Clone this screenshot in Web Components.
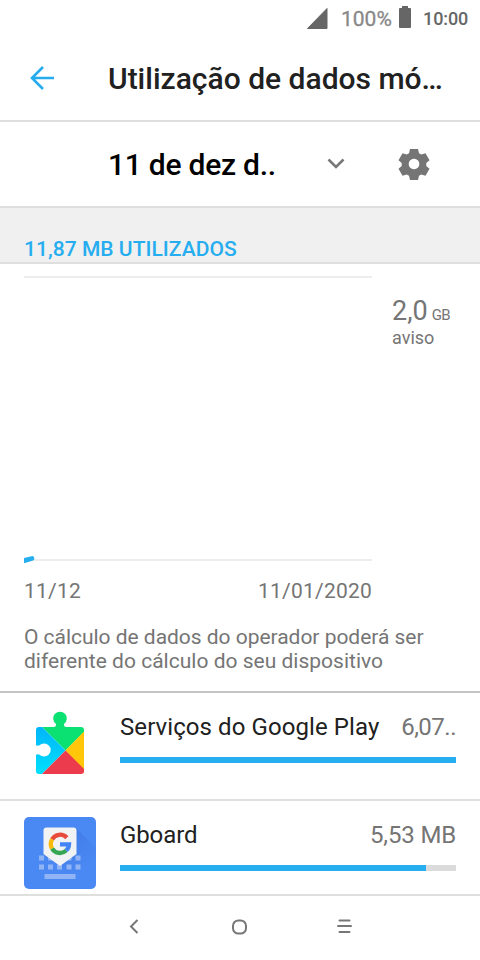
<!DOCTYPE html>
<html lang="pt"><head><meta charset="utf-8"><title>Utilização de dados móveis</title>
<style>html,body{margin:0;background:#fff}body{width:480px;height:960px;overflow:hidden;font-family:Roboto,"Liberation Sans",sans-serif}</style></head>
<body><data-screen></data-screen>
<script>
const def=(name,css,html)=>customElements.define(name,class extends HTMLElement{
  constructor(){super();this.attachShadow({mode:'open'}).innerHTML=`<style>*{box-sizing:border-box}svg{display:block;flex:none}${css}</style>${html}`}
  connectedCallback(){const f=this.shadowRoot.querySelector('.fill');if(f)f.style.width=this.getAttribute('value')+'px'}
});
def('status-bar',`:host{display:flex;height:38px;padding-left:306px;color:#666}
 .p{font-size:21px;line-height:38px;margin-left:13px;color:#888;width:58px;letter-spacing:0;-webkit-text-stroke:.3px #888}
 .t{font-size:18px;line-height:38px;font-weight:500;margin-left:12px;letter-spacing:-.1px}`,
 `<svg width="22" height="38"><path d="M21 8.500v20H1.500z" fill="#666" stroke="#666" stroke-width="1" stroke-linejoin="round"/></svg><span class="p">100%</span>
 <svg width="12" height="38"><path d="M3 6h6v2h2q1 0 1 1v18q0 1-1 1H1q-1 0-1-1V9q0-1 1-1h2z" fill="#666"/></svg><span class="t">10:00</span>`);
def('title-bar',`:host{display:flex;align-items:center;height:84px;padding-left:28px;border-bottom:2px solid #dfdfdf}
 h1{margin:0 0 0 52px;font:500 30px/82px Roboto,sans-serif;color:#212121;white-space:nowrap}`,
 `<svg width="28" height="28" fill="none" stroke="#26abee" stroke-width="2.600"><path d="M26 13H4M15 2L4 13l11 11"/></svg><h1><slot></slot></h1>`);
def('cycle-picker',`:host{display:flex;align-items:center;height:86px;padding-left:108px;border-bottom:2px solid #dfdfdf}
 b{font:500 30px/82px Roboto,sans-serif;letter-spacing:-.25px;width:219px;color:#000;padding-top:2px;white-space:nowrap}.g{margin-left:52px}`,
 `<b><slot></slot></b><svg width="18" height="18" fill="none" stroke="#777" stroke-width="2.500"><path d="M1.500 4.500L9 12l7.500-7.500"/></svg>
 <svg class="g" width="34" height="34" viewBox="0 0 34 34"><path fill="#757575" fill-rule="evenodd" d="M13 2h8l1 4.200 2.300 1.300 4.200-1.300 4 7-3.200 2.900v2.800l3.200 2.900-4 6.900-4.200-1.300-2.300 1.400-1 4.100h-8l-1-4.100-2.300-1.400-4.200 1.300-4-6.900 3.200-2.900v-2.800l-3.200-2.900 4-7 4.200 1.300L12 6.200zM17 11.700a5.300 5.300 0 1 0 .01 0z"/></svg>`);
def('usage-label',`:host{display:block;height:56px;padding:28px 24px 0;background:#f0f0f0;border-bottom:2px solid #dfdfdf;color:#26adef;font:500 21px/26px Roboto,sans-serif;letter-spacing:.04px}`,`<slot></slot>`);
def('usage-chart',`:host{display:grid;grid-template-columns:348px 1fr;column-gap:20px;padding:12px 0 0 24px;color:#757575;height:361px;align-content:start}
 .r{padding-top:20px}.v{font-size:27px;line-height:30px;height:30px}.v small{font-size:15px;margin-left:4px;letter-spacing:-.7px}.a{font-size:18px;line-height:24px}
 .d{display:flex;justify-content:space-between;font-size:21px;line-height:26px;margin-top:14px;letter-spacing:.22px}`,
 `<svg width="348" height="288"><path d="M0 1h348M0 284h348" stroke="#ededed" stroke-width="2"/><path d="M0 282L7.500 280.200a2.300 2.300 0 0 1 1 4.600L0 287.200z" fill="#26aeef"/></svg>
 <div class="r"><div class="v">2,0<small>GB</small></div><div class="a">aviso</div></div><div class="d"><span>11/12</span><span>11/01/2020</span></div>`);
def('carrier-note',`:host{display:block;height:68px;padding:0 24px;border-bottom:2px solid #c4c4c4;color:#757575;font-size:21px;line-height:24px;letter-spacing:-.03px;white-space:nowrap}`,`<slot></slot>`);
def('usage-row',`:host{display:grid;grid-template-columns:72px 336px;column-gap:24px;height:108px;padding:16px 24px 0;border-bottom:2px solid #dfdfdf}
 .h{display:flex;justify-content:space-between;font-size:24px;line-height:36px;color:#212121;white-space:nowrap}.h>div{letter-spacing:var(--ls,0)}.h>span{color:#757575;letter-spacing:var(--as,-.15px)}
 .bar{height:6px;background:#dbdbdb;margin-top:12px}.fill{height:6px;background:#26aef0}`,
 `<slot name="icon"></slot><div><div class="h"><div><slot></slot></div><span><slot name="amount"></slot></span></div><div class="bar"><div class="fill"></div></div></div>`);
def('play-icon',`:host{display:block}`,
 `<svg width="72" height="72" viewBox="24 709 72 72"><defs><clipPath id="c"><path d="M39 727h14.500q3.500 0 2.300-3.200a6.800 6.800 0 1 1 8.400 0q-1.200 3.200 2.300 3.200H81q3 0 3 3v41q0 3-3 3H39q-3 0-3-3v-15.500q0-1.800 3-1 2.500 2 5.200 2a6.500 6.500 0 1 0 0-13q-2.700 0-5.200 2-3 .8-3-1V730q0-3 3-3z"/></clipPath><linearGradient id="b" x1="0" y1="0" x2="0" y2="1"><stop stop-color="#00b5fa"/><stop offset="1" stop-color="#00e0fc"/></linearGradient></defs>
 <g clip-path="url(#c)"><path d="M36 700h48v32L65.500 750.500 42 727z" fill="#0be073"/><path d="M36 727h6L65.500 750.500 42 774h-6z" fill="url(#b)"/><path d="M65.500 750.500L84 731.500v42z" fill="#ffc60a"/><path d="M65.500 750.500L84 769v5H42z" fill="#ec3b4c"/></g></svg>`);
def('gboard-icon',`:host{display:block}`,
 `<svg width="72" height="72"><defs><clipPath id="c"><rect width="72" height="72" rx="5"/></clipPath><linearGradient id="s" gradientUnits="userSpaceOnUse" x1="40" y1="24" x2="60" y2="52"><stop stop-color="#3467cf"/><stop offset="1" stop-color="#4a88f3"/></linearGradient></defs>
 <g clip-path="url(#c)"><rect width="72" height="72" fill="#4a88f3"/><path d="M52 11L72 31V72H58L36 49z" fill="url(#s)" opacity=".3"/>
 <path fill="#91b5f4" d="M15 38.500h5v5h-5zM24 38.500h5v5h-5zM42.500 38.500h5v5h-5zM51.500 38.500h5v5h-5zM15 47.500h5v5h-5zM24 47.500h5v5h-5zM33 47.500h5v5h-5zM42.500 47.500h5v5h-5zM51.500 47.500h5v5h-5zM20.500 57h31v5h-31z"/>
 <path d="M22.500 10.500h27q3 0 3 3V37L36 49 19.500 37V13.500q0-3 3-3z" fill="#f1f2f4"/></g>
 <g fill="none" stroke-width="4.300"><path d="M42.800 20.700A9.100 9.100 0 0 0 28.100 22.400" stroke="#e84a3b"/><path d="M28.100 22.400a9.100 9.100 0 0 0 0 9.200" stroke="#f8bb0c"/><path d="M28.100 31.600a9.100 9.100 0 0 0 14 1.900" stroke="#34a652"/><path d="M42.100 33.500A9 9 0 0 0 45 27.300H36" stroke="#4384f4"/></g></svg>`);
def('nav-bar',`:host{display:flex;height:66px;border-top:2px solid #dfdfdf;background:#fff;padding-left:126px;position:fixed;left:0;right:0;bottom:0}svg{margin-right:81px}`,
 `<svg width="24" height="64" fill="none" stroke="#777" stroke-width="2"><path d="M11.500 24L5 30.500l6.500 6.500"/></svg>
 <svg width="24" height="64" fill="none" stroke="#777" stroke-width="2"><rect x="2" y="24.500" width="13" height="13" rx="5.300"/></svg>
 <svg width="24" height="64" fill="none" stroke="#777" stroke-width="2" stroke-linecap="round"><path d="M3.500 24.500h10M2 30h13M3.500 36h10"/></svg>`);
def('data-screen',`:host{display:block;height:960px;overflow:hidden}.dots{--ls:.08px;--as:-.5px}.board{--ls:-.1px}.l2{letter-spacing:.01px}`,
 `<status-bar></status-bar><title-bar>Utilização de dados mó…</title-bar><cycle-picker>11 de dez d..</cycle-picker><usage-label>11,87 MB UTILIZADOS</usage-label><usage-chart></usage-chart>
 <carrier-note>O cálculo de dados do operador poderá ser<br><span class="l2">diferente do cálculo do seu dispositivo</span></carrier-note>
 <usage-row class="dots" value="336"><play-icon slot="icon"></play-icon>Serviços do Google Play<span slot="amount">6,07..</span></usage-row>
 <usage-row class="board" value="306"><gboard-icon slot="icon"></gboard-icon>Gboard<span slot="amount">5,53 MB</span></usage-row><nav-bar></nav-bar>`);
</script></body></html>
